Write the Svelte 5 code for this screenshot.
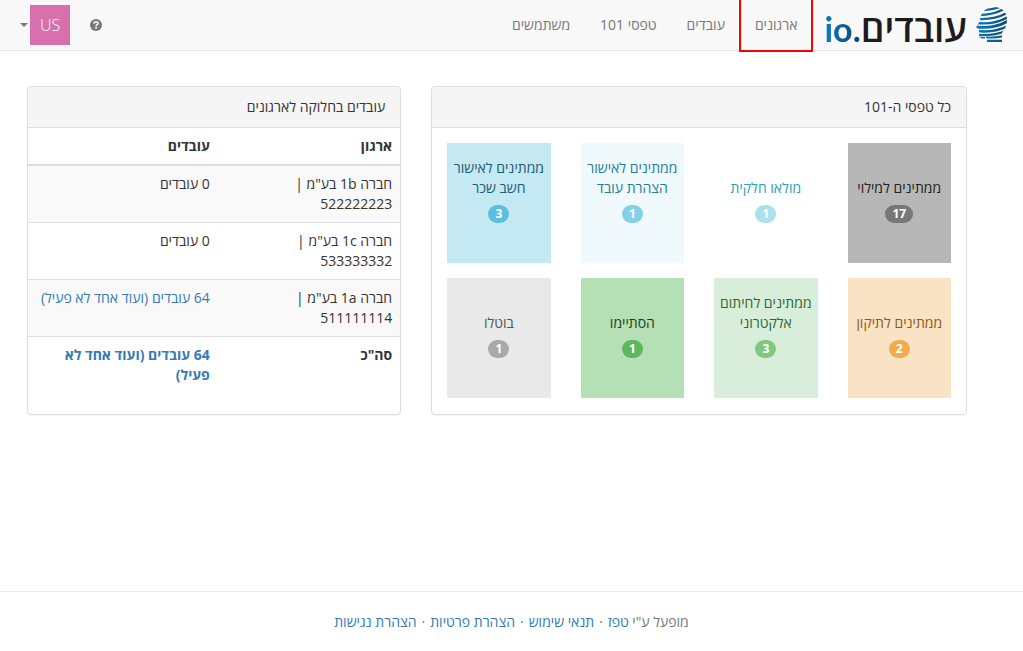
<script>
  const links = ['ארגונים', 'עובדים', 'טפסי 101', 'משתמשים'];

  const tiles = [
    { label: 'ממתינים למילוי', count: 17, kind: 'pending' },
    { label: 'מולאו חלקית', count: 1, kind: 'partial' },
    { label: 'ממתינים לאישור הצהרת עובד', count: 1, kind: 'declaration' },
    { label: 'ממתינים לאישור חשב שכר', count: 3, kind: 'payroll' },
    { label: 'ממתינים לתיקון', count: 2, kind: 'fix' },
    { label: 'ממתינים לחיתום אלקטרוני', count: 3, kind: 'signing' },
    { label: 'הסתיימו', count: 1, kind: 'done' },
    { label: 'בוטלו', count: 1, kind: 'cancelled' }
  ];

  const orgs = [
    { name: 'חברה 1b בע"מ', id: '522222223', employees: '0 עובדים', linked: false },
    { name: 'חברה 1c בע"מ', id: '533333332', employees: '0 עובדים', linked: false },
    { name: 'חברה 1a בע"מ', id: '511111114', employees: '64 עובדים (ועוד אחד לא פעיל)', linked: true }
  ];

  const footerLinks = ['טפז', 'תנאי שימוש', 'הצהרת פרטיות', 'הצהרת נגישות'];
</script>

<div class="page" dir="rtl">
  <header class="navbar">
    <a class="brand" href="#home">
      <svg class="head" width="32" height="36" viewBox="0 0 32 36" aria-hidden="true">
        <defs>
          <linearGradient id="stripes" x1="0" y1="0" x2="32" y2="0" gradientUnits="userSpaceOnUse">
            <stop offset="0" stop-color="#0c7cc0" />
            <stop offset="1" stop-color="#0b4a70" />
          </linearGradient>
          <clipPath id="profile">
            <path d="M18 0C26 0 31 5 31 13C31 19 28 23 26 26L26 35H11L11 31C8 32 4 32 3 29L3 23L0 20L4 14C4 6 10 0 18 0Z" />
          </clipPath>
        </defs>
        <g clip-path="url(#profile)" fill="none" stroke="url(#stripes)" stroke-width="2.4">
          <path d="M8 3Q16 3 24 0" />
          <path d="M3 8Q17 8 28 2" />
          <path d="M2 12Q18 13 31 6" />
          <path d="M1 16Q18 18 32 10" />
          <path d="M0 20Q18 22 32 14" stroke-width="2.8" />
          <path d="M1 24Q18 26 32 19" />
          <path d="M2 28Q18 29 30 24" />
          <path d="M3 31Q6 31 9 31M10 30.500Q19 31 28 29" stroke-width="1.8" />
          <path d="M11 34H28" />
        </g>
      </svg>
      <span class="wordmark">עובדים<span class="tld">.io</span></span>
    </a>
    <nav>
      {#each links as link, i}
        <a class="nav-link" class:marked={i === 0} href="#nav-{i}">{link}</a>
      {/each}
    </nav>
    <div class="tools">
      <a class="help" href="#help" aria-label="עזרה">
        <svg width="12" height="12" viewBox="0 0 12 12" aria-hidden="true">
          <circle cx="6" cy="6" r="6" fill="#777" />
          <path d="M4 4.7C4 3.4 4.9 2.7 6.1 2.7S8.1 3.4 8.1 4.5C8.1 5.7 6.1 5.7 6.1 7.2" fill="none" stroke="#f8f8f8" stroke-width="1.6" />
          <rect x="5.2" y="8" width="1.8" height="1.7" fill="#f8f8f8" />
        </svg>
      </a>
      <button class="user" type="button">
        <span class="avatar">US</span>
        <span class="caret"></span>
      </button>
    </div>
  </header>

  <main>
    <div class="col">
      <section class="panel">
        <h2>כל טפסי ה-101</h2>
        <div class="tiles">
          {#each tiles as tile}
            <a class="tile {tile.kind}" href="#{tile.kind}">
              <span class="label">{tile.label}</span>
              <span class="badge">{tile.count}</span>
            </a>
          {/each}
        </div>
      </section>
    </div>

    <div class="col">
      <section class="panel">
        <h2>עובדים בחלוקה לארגונים</h2>
        <table>
          <thead>
            <tr><th class="name">ארגון</th><th>עובדים</th></tr>
          </thead>
          <tbody>
            {#each orgs as org}
              <tr>
                <td>{org.name} | {org.id}</td>
                <td>
                  {#if org.linked}<a href="#org-{org.id}">{org.employees}</a>{:else}{org.employees}{/if}
                </td>
              </tr>
            {/each}
            <tr class="total">
              <td>סה"כ</td>
              <td><a href="#all">64 עובדים (ועוד אחד לא פעיל)</a></td>
            </tr>
          </tbody>
        </table>
      </section>
    </div>
  </main>

  <footer>
    מופעל ע"י
    {#each footerLinks as link, i}
      {#if i > 0}<span class="dot">·</span>{/if}<a href="#footer-{i}">{link}</a>
    {/each}
  </footer>
</div>

<style>
  :global(body) {
    margin: 0;
  }

  .page {
    display: flex;
    flex-direction: column;
    min-height: 100vh;
    background: #fff;
    color: #333;
    font: 14px/20px 'Open Sans', 'Noto Sans', sans-serif;
  }

  .page * {
    box-sizing: border-box;
  }

  a {
    color: #337ab7;
    text-decoration: none;
  }

  .navbar {
    display: flex;
    align-items: stretch;
    min-height: 51px;
    padding: 0 15px;
    background: #f8f8f8;
    border-bottom: 1px solid #e7e7e7;
  }

  .brand {
    display: flex;
    align-items: flex-start;
    height: 50px;
    margin-left: 12px;
    color: #1c1c1c;
    white-space: nowrap;
  }

  .head {
    margin: 7px 0 0 9px;
  }

  .wordmark {
    font-size: 37px;
    line-height: 56px;
    font-weight: 600;
  }

  .tld {
    font-family: Lato, 'Open Sans', sans-serif;
    font-size: 34px;
    font-weight: 700;
    background: linear-gradient(to left, #0d4468, #0a7cc4);
    -webkit-background-clip: text;
    background-clip: text;
    color: transparent;
  }

  nav {
    display: flex;
  }

  .nav-link {
    position: relative;
    padding: 15px;
    color: #777;
  }

  .marked::after {
    content: '';
    position: absolute;
    inset: 0 -1px -2px;
    border: 2px solid #f00;
    border-top: 0;
  }

  .tools {
    display: flex;
    align-items: center;
    gap: 20px;
    margin-right: auto;
  }

  .help {
    display: flex;
  }

  .user {
    display: flex;
    align-items: center;
    gap: 2px;
    padding: 0 0 0 5px;
    border: 0;
    background: none;
    font: inherit;
  }

  .avatar {
    width: 40px;
    height: 40px;
    background: #d870ad;
    color: #fff;
    font: 300 16px/40px 'Open Sans', sans-serif;
    text-align: center;
  }

  .caret {
    border: 4px solid transparent;
    border-top-color: #777;
    border-bottom: 0;
  }

  main {
    display: grid;
    grid-template-columns: 7fr 5fr;
    flex: 1;
    align-items: start;
    padding: 35px 41px 20px 12px;
  }

  .col {
    min-width: 0;
    padding: 0 15px;
  }

  .panel {
    padding-bottom: 1px;
    border: 1px solid #ddd;
    border-radius: 4px;
    box-shadow: 0 1px 1px rgba(0, 0, 0, 0.05);
    overflow: hidden;
  }

  h2 {
    margin: 0;
    padding: 10px 15px;
    border-bottom: 1px solid #ddd;
    background: #f5f5f5;
    font-size: 14px;
    line-height: 20px;
    font-weight: 400;
  }

  .tiles {
    display: grid;
    grid-template-columns: repeat(4, 1fr);
    gap: 15px 30px;
    padding: 15px;
  }

  .tile {
    display: flex;
    flex-direction: column;
    align-items: center;
    gap: 7px;
    min-height: 120px;
    padding: 15px 5px;
    text-align: center;
  }

  .label {
    display: flex;
    align-items: flex-end;
    min-height: 40px;
  }

  .badge {
    padding: 3px 7px;
    border-radius: 10px;
    color: #fff;
    font-size: 12px;
    line-height: 12px;
    font-weight: 700;
  }

  .pending { background: #b7b7b7; color: #222; }
  .pending .badge { background: #777; }
  .partial { color: #2aa1c0; }
  .partial .badge { background: #ade0ef; }
  .declaration { background: #f0f9fc; color: #1f7e9a; }
  .declaration .badge { background: #84d0e7; }
  .payroll { background: #c5e9f3; color: #1b5c70; }
  .payroll .badge { background: #5bc0de; }
  .fix { background: #fae2c4; color: #8a5a14; }
  .fix .badge { background: #f0ad4e; }
  .signing { background: #d9eeda; color: #2d672d; }
  .signing .badge { background: #80c780; }
  .done { background: #b5dfb5; color: #1d3e1d; }
  .done .badge { background: #5cb85c; }
  .cancelled { background: #e9e9e9; color: #555; }
  .cancelled .badge { background: #a9a9a9; }

  table {
    width: 100%;
    margin-bottom: 20px;
    border-collapse: collapse;
  }

  th,
  td {
    padding: 8px;
    text-align: right;
    vertical-align: top;
  }

  th {
    border-bottom: 2px solid #ddd;
  }

  .name {
    width: 49%;
  }

  td {
    border-top: 1px solid #ddd;
  }

  tbody tr:nth-child(odd) {
    background: #f9f9f9;
  }

  .total {
    font-weight: 700;
  }

  footer {
    padding: 20px 15px 19px;
    border-top: 1px solid #eee;
    color: #777;
    text-align: center;
  }

  .dot {
    margin: 0 5px;
  }
</style>
